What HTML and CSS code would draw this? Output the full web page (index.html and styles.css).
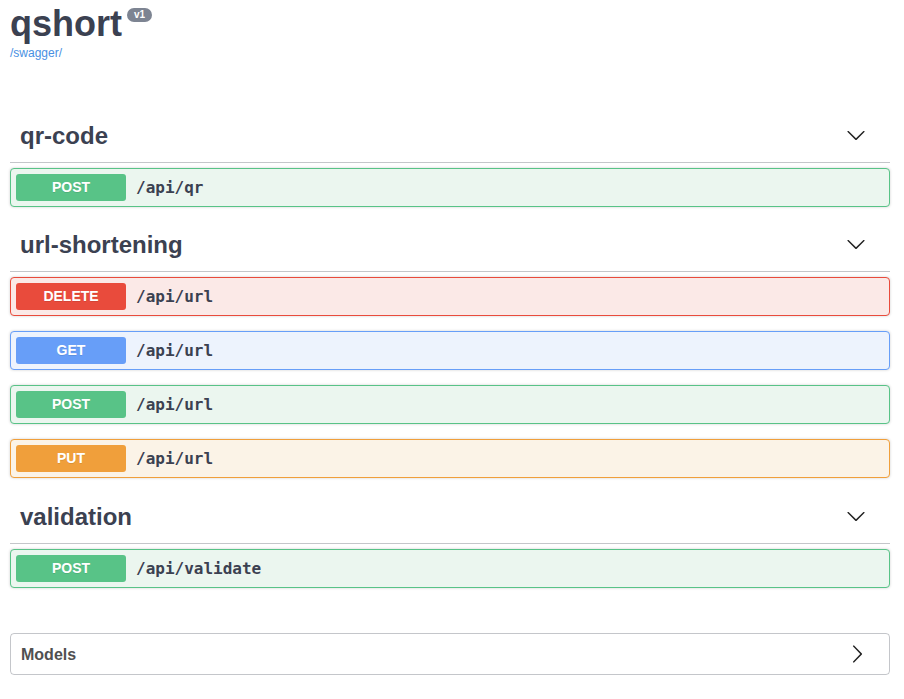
FILE: index.html
```html
<!DOCTYPE html>
<html lang="en">
<head>
<meta charset="utf-8">
<title>qshort</title>
<link rel="stylesheet" href="styles.css">
</head>
<body>
<div class="wrapper">
  <div class="info">
    <div class="title-row">
      <h2 class="title">qshort</h2>
      <span class="version">v1</span>
    </div>
    <a class="base-link" href="#">/swagger/</a>
  </div>

  <section class="tag-section">
    <h3 class="tag">
      <span class="tag-name">qr-code</span>
      <svg class="chev-down" width="20" height="20" viewBox="0 0 20 20"><path d="M17.418 6.109c.272-.268.709-.268.979 0s.271.701 0 .969l-7.908 7.83c-.27.268-.707.268-.979 0l-7.908-7.83c-.27-.268-.27-.701 0-.969.271-.268.709-.268.979 0L10 13.25l7.418-7.141z"/></svg>
    </h3>
    <div class="opblock post">
      <span class="method">POST</span>
      <span class="path">/api/qr</span>
    </div>
  </section>

  <section class="tag-section">
    <h3 class="tag">
      <span class="tag-name">url-shortening</span>
      <svg class="chev-down" width="20" height="20" viewBox="0 0 20 20"><path d="M17.418 6.109c.272-.268.709-.268.979 0s.271.701 0 .969l-7.908 7.83c-.27.268-.707.268-.979 0l-7.908-7.83c-.27-.268-.27-.701 0-.969.271-.268.709-.268.979 0L10 13.25l7.418-7.141z"/></svg>
    </h3>
    <div class="opblock delete">
      <span class="method">DELETE</span>
      <span class="path">/api/url</span>
    </div>
    <div class="opblock get">
      <span class="method">GET</span>
      <span class="path">/api/url</span>
    </div>
    <div class="opblock post">
      <span class="method">POST</span>
      <span class="path">/api/url</span>
    </div>
    <div class="opblock put">
      <span class="method">PUT</span>
      <span class="path">/api/url</span>
    </div>
  </section>

  <section class="tag-section last">
    <h3 class="tag">
      <span class="tag-name">validation</span>
      <svg class="chev-down" width="20" height="20" viewBox="0 0 20 20"><path d="M17.418 6.109c.272-.268.709-.268.979 0s.271.701 0 .969l-7.908 7.83c-.27.268-.707.268-.979 0l-7.908-7.83c-.27-.268-.27-.701 0-.969.271-.268.709-.268.979 0L10 13.25l7.418-7.141z"/></svg>
    </h3>
    <div class="opblock post">
      <span class="method">POST</span>
      <span class="path">/api/validate</span>
    </div>
  </section>

  <section class="models">
    <h4 class="models-head">
      <span>Models</span>
      <svg class="chev-right" width="20" height="20" viewBox="0 0 20 20"><path d="M13.25 10L6.109 2.58c-.268-.27-.268-.707 0-.979.268-.27.701-.27.969 0l7.83 7.908c.268.271.268.709 0 .979l-7.830 7.908c-.268.271-.701.27-.969 0-.268-.269-.268-.707 0-.979L13.25 10z"/></svg>
    </h4>
  </section>
</div>
</body>
</html>
```

FILE: styles.css
```css
* { box-sizing: border-box; }

html, body {
  margin: 0;
  padding: 0;
  background: #fff;
}

body {
  font-family: "Liberation Sans", Arial, sans-serif;
  color: #3b4151;
}

.wrapper {
  padding: 0 14px 0 10px;
}

.info {
  padding-top: 3px;
  margin-bottom: 53px;
}

.title-row {
  display: flex;
  align-items: flex-start;
}

.title {
  margin: 0;
  font-size: 36px;
  line-height: 41px;
  font-weight: 700;
  color: #3b4151;
}

.version {
  margin: 5px 0 0 5px;
  padding: 2px 7px;
  font-size: 10px;
  line-height: 10px;
  font-weight: 700;
  color: #fff;
  background: #7d8492;
  border-radius: 57px;
}

.base-link {
  display: block;
  margin-top: 2px;
  font-size: 12px;
  line-height: 14px;
  color: #4990e2;
  text-decoration: none;
}

.tag-section {
  display: flex;
  flex-direction: column;
}

.tag-section.last {
  margin-top: 1px;
}

.tag {
  display: flex;
  align-items: center;
  margin: 0 0 5px;
  padding: 8px 10px 12px 10px;
  font-size: 24px;
  line-height: 29px;
  font-weight: 700;
  color: #3b4151;
  border-bottom: 1px solid rgba(59, 65, 81, .3);
}

.tag-name {
  flex: 1;
}

.chev-down {
  margin: 0 14px 2px 0;
  fill: #222;
}

.opblock {
  display: flex;
  align-items: center;
  margin: 0 0 15px;
  padding: 5px;
  border: 1px solid;
  border-radius: 4px;
  box-shadow: 0 0 3px rgba(0, 0, 0, .19);
}

.method {
  min-width: 110px;
  padding: 6px 0;
  font-size: 14px;
  line-height: 15px;
  font-weight: 700;
  color: #fff;
  text-align: center;
  border-radius: 3px;
  text-shadow: 0 1px 0 rgba(0, 0, 0, .1);
}

.path {
  padding: 0 10px;
  font-family: "DejaVu Sans Mono", "Liberation Mono", monospace;
  font-size: 16px;
  font-weight: 700;
  color: #3b4151;
}

.opblock.post { border-color: #58c387; background: #ebf6ef; }
.opblock.post .method { background: #58c387; }

.opblock.delete { border-color: #e94b3c; background: #fbe9e7; }
.opblock.delete .method { background: #e94b3c; }

.opblock.get { border-color: #679ef8; background: #edf3fd; }
.opblock.get .method { background: #679ef8; }

.opblock.put { border-color: #f09f3b; background: #fbf3e7; }
.opblock.put .method { background: #f09f3b; }

.models {
  margin: 30px 0;
  border: 1px solid rgba(59, 65, 81, .3);
  border-radius: 4px;
}

.models-head {
  display: flex;
  align-items: center;
  margin: 0;
  padding: 10px 20px 10px 10px;
  font-size: 16px;
  line-height: 19px;
  font-weight: 700;
  color: #505050;
}

.models-head span {
  flex: 1;
}

.chev-right {
  margin-right: 2px;
  fill: #222;
}
```
